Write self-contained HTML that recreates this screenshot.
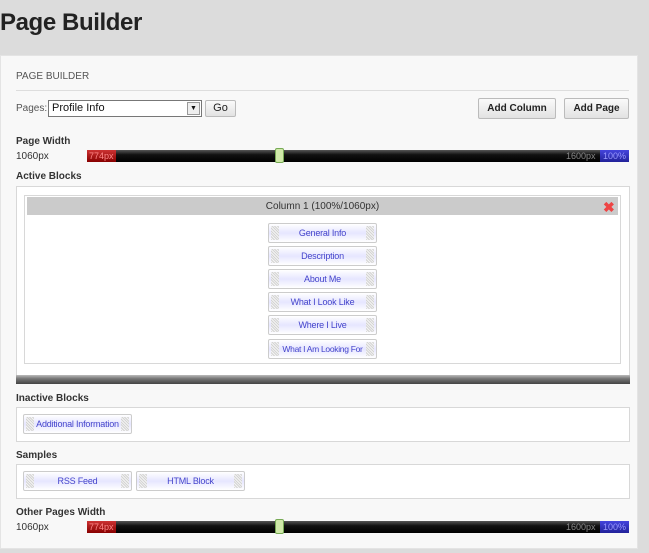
<!DOCTYPE html>
<html><head><style>
*{margin:0;padding:0;box-sizing:border-box}
body{width:649px;height:553px;background:#dcdcdc;font-family:"Liberation Sans",Arial,sans-serif;position:relative;overflow:hidden;font-size:10px;color:#333}
.a{position:absolute}
h1{position:absolute;left:0;top:9px;font-size:24px;font-weight:bold;color:#222;letter-spacing:-0.4px}
.panel{left:0;top:55px;width:638px;height:494px;background:#f8f8f8;border:1px solid #e4e4e4}
.lbl{font-weight:bold;font-size:10px;color:#333}
.box{background:#fff;border:1px solid #d8d8d8}
.btn{background:linear-gradient(#fafafa,#e2e2e2);border:1px solid #bbb;border-radius:2px;font-weight:bold;font-size:10px;text-align:center;color:#222}
.slider{height:12px;background:linear-gradient(#555,#111 40%,#000);border-radius:1px}
.red{background:linear-gradient(#c33,#800);color:#f88;font-size:9px;line-height:12px;padding-left:2px}
.blue{background:linear-gradient(#44d,#229);color:#99f;font-size:9px;line-height:12px;text-align:center}
.hnd{width:9px;height:15px;background:#cfe8a8;border:1px solid #7a5;border-radius:2px}
.blk{z-index:0;height:20px;width:109px;border:1px solid #ccc;border-radius:2px;background:linear-gradient(#fff,#e6e6ff 50%,#fff);color:#44c;font-size:9px;text-align:center;line-height:18px;white-space:nowrap;letter-spacing:-0.2px}
.blk:before,.blk:after{content:"";position:absolute;top:2px;width:8px;height:14px;background:repeating-linear-gradient(45deg,#d4d4d4 0 1px,#f4f4f4 1px 2px);z-index:-1}
.blk:before{left:2px}.blk:after{right:2px}
</style></head><body>
<h1>Page Builder</h1>
<div class="a panel"></div>
<div class="a" style="left:16px;top:71px;font-size:10px;color:#555">PAGE BUILDER</div>
<div class="a" style="left:16px;top:90px;width:613px;height:1px;background:#ddd"></div>
<div class="a" style="left:16px;top:103px;color:#555">Pages:</div>
<div class="a" style="left:48px;top:100px;width:154px;height:17px;border:1px solid #777;background:#fff;font-size:11px;line-height:15px;padding-left:3px;color:#111">Profile Info
<div class="a" style="right:1px;top:1px;width:13px;height:13px;border:1px solid #999;background:#eee;font-size:7px;line-height:11px;text-align:center">▼</div></div>
<div class="a btn" style="left:205px;top:100px;width:31px;height:17px;font-weight:normal;font-size:11px;line-height:15px">Go</div>
<div class="a btn" style="left:478px;top:98px;width:78px;height:21px;line-height:19px">Add Column</div>
<div class="a btn" style="left:564px;top:98px;width:65px;height:21px;line-height:19px">Add Page</div>
<div class="a lbl" style="left:16px;top:136px">Page Width</div>
<div class="a" style="left:16px;top:151px">1060px</div>
<div class="a slider" style="left:87px;top:150px;width:542px"></div>
<div class="a red" style="left:87px;top:150px;width:29px">774px</div>
<div class="a" style="left:566px;top:150px;font-size:9px;line-height:12px;color:#888">1600px</div>
<div class="a blue" style="left:600px;top:150px;width:29px">100%</div>
<div class="a hnd" style="left:275px;top:148px"></div>
<div class="a lbl" style="left:16px;top:171px">Active Blocks</div>
<div class="a box" style="left:16px;top:186px;width:614px;height:190px"></div>
<div class="a box" style="left:24px;top:195px;width:597px;height:169px"></div>
<div class="a" style="left:27px;top:197px;width:591px;height:18px;background:#cbcbcb;text-align:center;font-size:10px;line-height:20px;color:#333">Column 1 (100%/1060px)</div>
<div class="a" style="left:603px;top:198px;font-size:14px;line-height:18px;color:#e44;font-weight:bold">✖</div>
<div class="a blk" style="left:268px;top:223px">General Info</div>
<div class="a blk" style="left:268px;top:246px">Description</div>
<div class="a blk" style="left:268px;top:269px">About Me</div>
<div class="a blk" style="left:268px;top:292px">What I Look Like</div>
<div class="a blk" style="left:268px;top:315px">Where I Live</div>
<div class="a blk" style="left:268px;top:339px;font-size:8.5px;letter-spacing:-0.3px">What I Am Looking For</div>
<div class="a" style="left:16px;top:375px;width:614px;height:9px;background:linear-gradient(#bbb,#777 40%,#444)"></div>
<div class="a lbl" style="left:16px;top:393px">Inactive Blocks</div>
<div class="a box" style="left:16px;top:407px;width:614px;height:35px"></div>
<div class="a blk" style="left:23px;top:414px">Additional Information</div>
<div class="a lbl" style="left:16px;top:450px">Samples</div>
<div class="a box" style="left:16px;top:464px;width:614px;height:35px"></div>
<div class="a blk" style="left:23px;top:471px">RSS Feed</div>
<div class="a blk" style="left:136px;top:471px">HTML Block</div>
<div class="a lbl" style="left:16px;top:507px">Other Pages Width</div>
<div class="a" style="left:16px;top:522px">1060px</div>
<div class="a slider" style="left:87px;top:521px;width:542px"></div>
<div class="a red" style="left:87px;top:521px;width:29px">774px</div>
<div class="a" style="left:566px;top:521px;font-size:9px;line-height:12px;color:#888">1600px</div>
<div class="a blue" style="left:600px;top:521px;width:29px">100%</div>
<div class="a hnd" style="left:275px;top:519px"></div>
</body></html>
